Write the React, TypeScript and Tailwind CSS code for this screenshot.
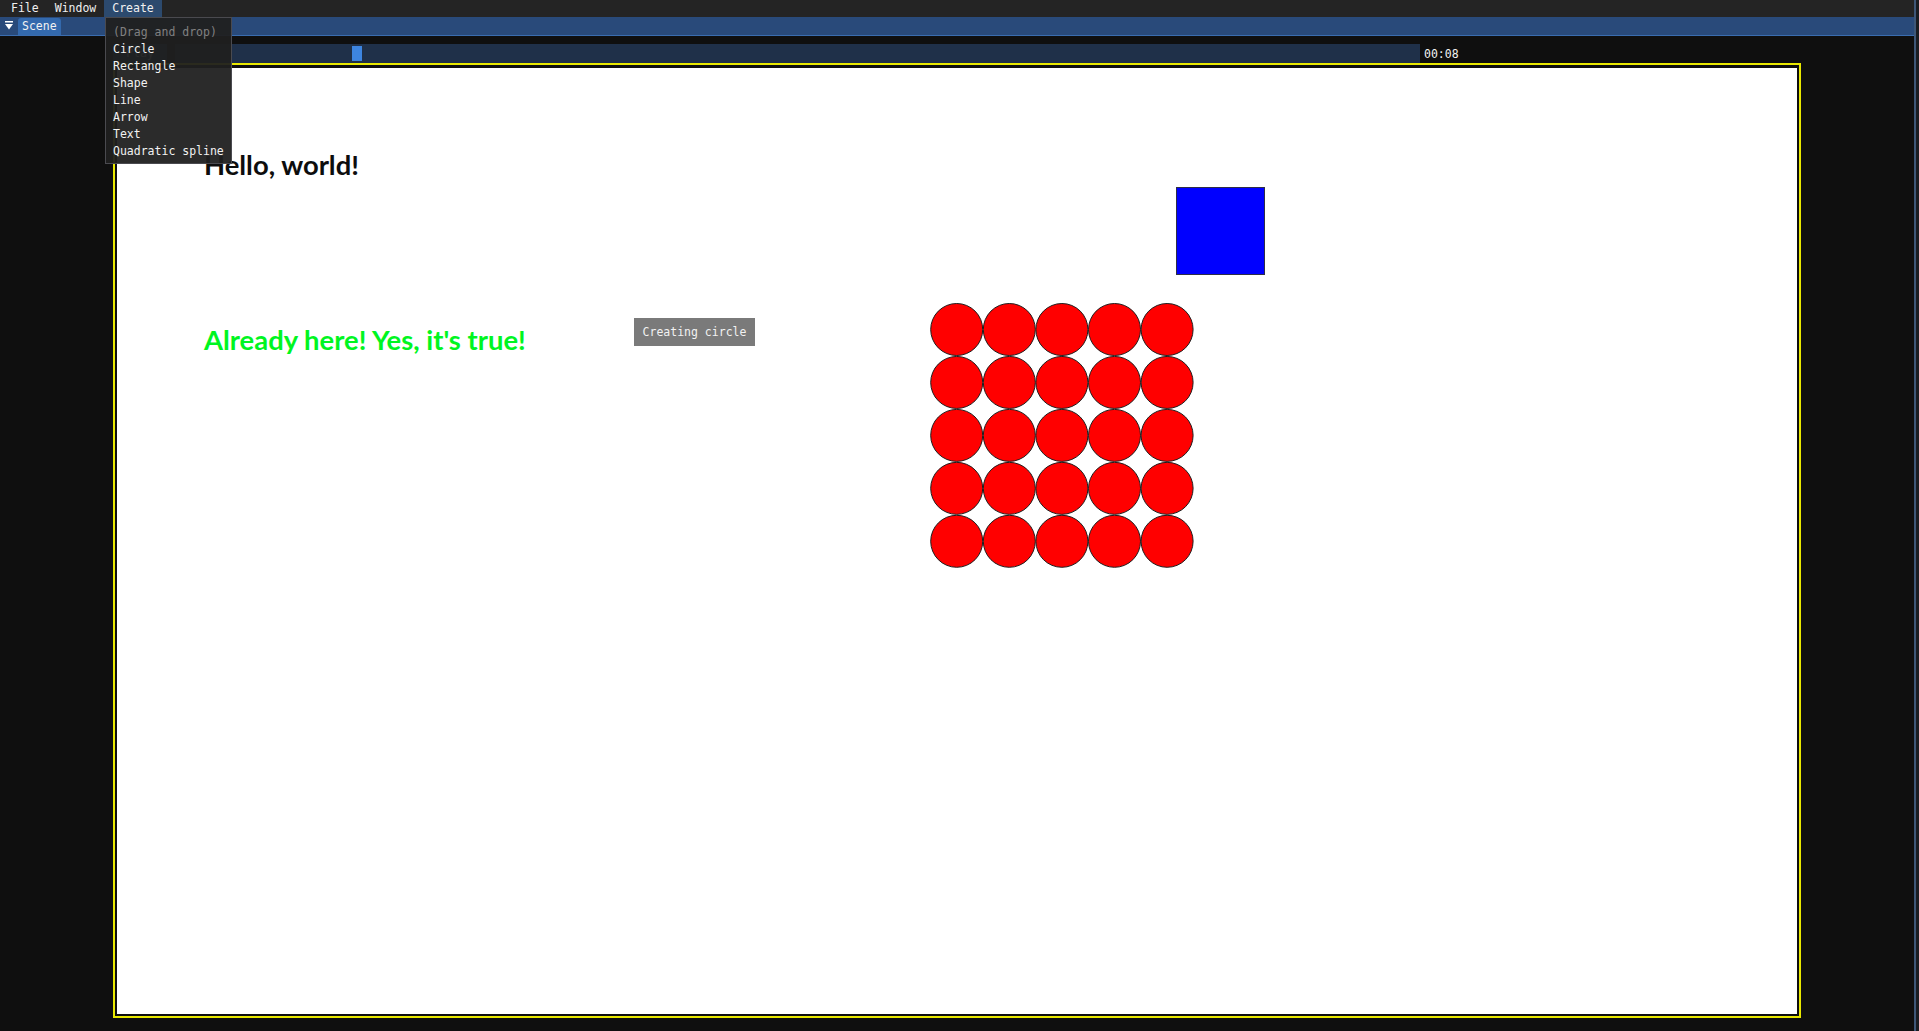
import React from 'react'

// ImGui-style scene editor: menu bar, docked "Scene" window, timeline slider and canvas

const MONO = "font-['DejaVu_Sans_Mono','Liberation_Mono',monospace] text-[11.5px] leading-none"
const CANVAS_FONT = "font-['Lato','Open_Sans',sans-serif] font-bold text-[27.4px] leading-none"

const MENU_ITEMS = ['Circle', 'Rectangle', 'Shape', 'Line', 'Arrow', 'Text', 'Quadratic spline']

function MenuBar() {
  return (
    <div className={`flex h-[17px] items-stretch bg-[#242424] pl-[3px] text-[#f0f0f0] ${MONO}`}>
      <div className="flex items-center px-2">File</div>
      <div className="flex items-center px-2">Window</div>
      <div className="flex items-center bg-[#2c4a6e] px-2">Create</div>
    </div>
  )
}

function CreatePopup() {
  return (
    <div
      className={`absolute left-[105px] top-[17px] z-10 w-[127px] border border-[#4a4a4f] bg-[rgba(32,32,32,0.95)] pb-[3px] pl-[7px] pt-[6px] text-[#f2f2f2] ${MONO}`}
    >
      <div className="flex h-[17px] items-center text-[#808080]">(Drag and drop)</div>
      {MENU_ITEMS.map(item => (
        <div key={item} className="flex h-[17px] items-center whitespace-nowrap">
          {item}
        </div>
      ))}
    </div>
  )
}

function TitleBar() {
  return (
    <div className="flex h-[19px] items-end border-b border-[#3a6db0] bg-[#294a7a] pl-[5px]">
      <div className="mb-[4px] mr-[5px] flex h-[10px] w-[8px] items-start">
        <svg width="8" height="9" viewBox="0 0 8 9">
          <rect x="0" y="0" width="8" height="1.5" fill="#ffffff" />
          <polygon points="0,3 8,3 4,8.5" fill="#ffffff" />
        </svg>
      </div>
      <div className={`flex h-[17px] items-center rounded-t-[3px] bg-[#3369ad] px-[4px] text-[#f2f2f2] ${MONO}`}>
        Scene
      </div>
    </div>
  )
}

function Timeline() {
  return (
    <div className="flex h-[19px] items-center pl-[113px]">
      <div className={`flex h-full w-[54px] items-center justify-center bg-[#23456d] text-[#f0f0f0] ${MONO}`}>
        Play
      </div>
      <div className="relative ml-[8px] h-full w-[1245px] bg-[#1f3049]">
        <div className="absolute left-[177px] top-[2px] h-[15px] w-[10px] bg-[#3d85e0]" />
      </div>
      <div className={`ml-[4px] mt-[3px] text-[#f2f2f2] ${MONO}`}>00:08</div>
    </div>
  )
}

function Circles() {
  const cells: { cx: number; cy: number }[] = []
  for (let row = 0; row < 5; row++) {
    for (let col = 0; col < 5; col++) {
      cells.push({ cx: 26.7 + col * 52.6, cy: 26.5 + row * 52.95 })
    }
  }
  return (
    <svg className="absolute left-[813px] top-[235px]" width="266" height="268" viewBox="0 0 266 268">
      {cells.map((c, i) => (
        <circle key={i} cx={c.cx} cy={c.cy} r="26" fill="#ff0000" stroke="#1e1e1e" strokeWidth="1" />
      ))}
    </svg>
  )
}

function Canvas() {
  return (
    <div className="ml-[113px] w-[1688px] border-2 border-[#e8e800] bg-[#0f0f0f] px-[2px] pb-[2px] pt-[3px]">
      <div className="relative h-[946px] w-full overflow-hidden bg-white">
        <div className={`absolute left-[87px] top-[83px] text-[#0d0d0d] ${CANVAS_FONT}`}>Hello, world!</div>
        <div className={`absolute left-[87px] top-[258px] text-[#00f521] ${CANVAS_FONT}`}>
          Already here! Yes, it's true!
        </div>
        <div
          className={`absolute left-[517px] top-[250px] flex h-[28px] w-[121px] items-center justify-center bg-[#7a7a7a] pt-[2px] text-[#f2f2f2] ${MONO}`}
        >
          Creating circle
        </div>
        <div className="absolute left-[1059px] top-[119px] h-[88px] w-[89px] border border-[#2e2e48] bg-[#0000ff]" />
        <Circles />
      </div>
    </div>
  )
}

export default function App() {
  return (
    <div className="relative flex h-[1031px] w-[1919px] overflow-hidden bg-[#0f0f0f]">
      <div className="flex w-[1914px] flex-col">
        <MenuBar />
        <TitleBar />
        <div className="h-[8px]" />
        <Timeline />
        <Canvas />
      </div>
      <div className="w-[2px] bg-[#3e5778]" />
      <div className="flex-1 bg-[#1a1d22]" />
      <CreatePopup />
    </div>
  )
}
